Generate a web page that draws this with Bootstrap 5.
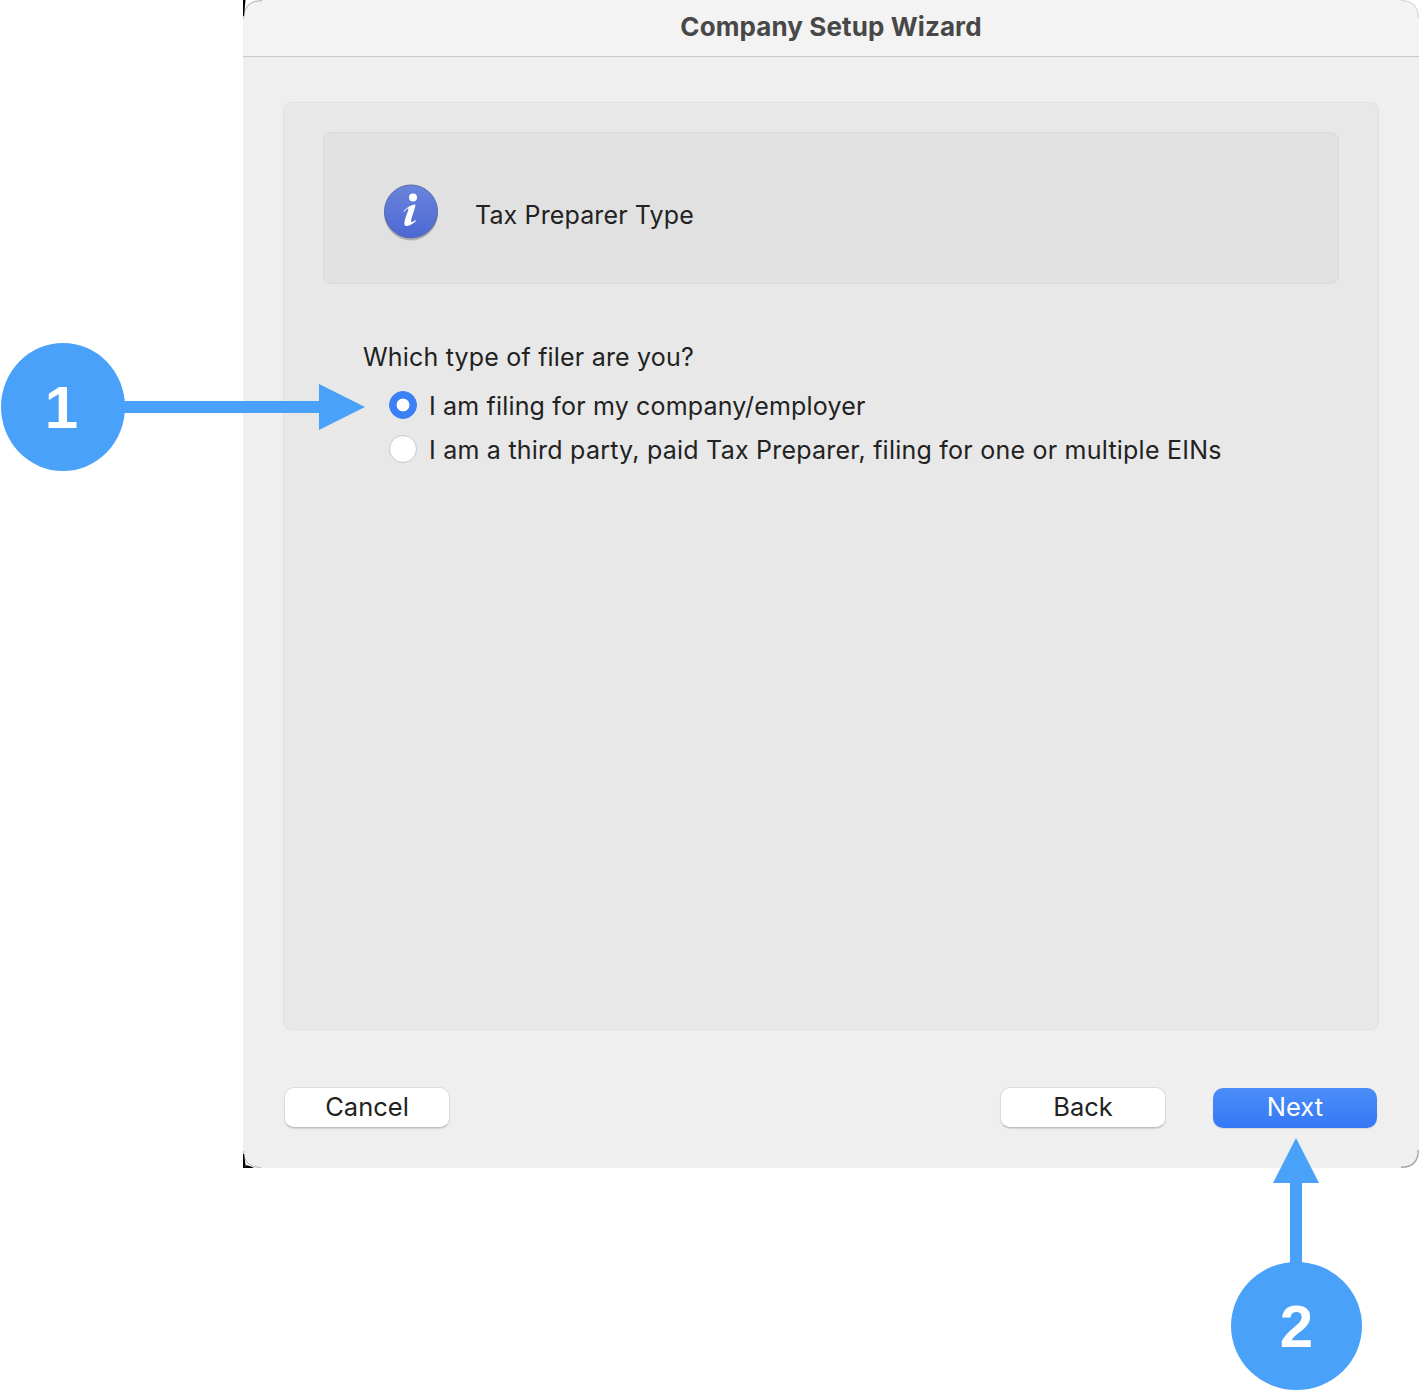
<!DOCTYPE html>
<html lang="en">
<head>
<meta charset="utf-8">
<title>Company Setup Wizard</title>
<link href="https://cdn.jsdelivr.net/npm/bootstrap@5.3.0/dist/css/bootstrap.min.css" rel="stylesheet">
<style>
html,body{height:1391px;overflow:hidden;background:#fff}
body{position:relative;font-family:Inter,"Liberation Sans",sans-serif;color:#222}
.wiz-window{margin-left:243px;width:1176px;height:1168px;background:#efefef;border-radius:16px;overflow:hidden;display:flex;flex-direction:column}
.wiz-title{height:57px;background:#f3f3f3;border-bottom:1px solid #c9c9c9;font:700 26px Inter,"Liberation Sans",sans-serif;letter-spacing:.1px;color:#484848;padding-bottom:4px}
.wiz-body{flex:1;padding:45px 40px 40px;display:flex;flex-direction:column}
.wiz-panel{height:928px;background:#e8e8e8;border:1px solid #e0e0e0;border-radius:8px;padding:29px 39px}
.wiz-head{height:152px;background:#e1e1e1;border:1px solid #dadada;border-radius:8px;padding:10px 60px 0;gap:35px;font-size:25px;letter-spacing:.13px}
.wiz-head span{margin-top:6px}
.wiz-q{font-size:25px;line-height:30px;margin:58px 0 0 40px;letter-spacing:.19px}
.wiz-opts{margin:19px 0 0 66px;font-size:25px;line-height:30px;letter-spacing:.23px}
.wiz-opts .form-check{display:flex;align-items:center;min-height:30px;padding:0;margin:0 0 14px;gap:12px}
.wiz-opts .form-check-input{float:none;margin:-3px 0 0;width:28px;height:28px;flex:none;background-color:#fff;border:1px solid #c8c8c8;box-shadow:none}
.wiz-opts .form-check-input:checked{background-color:#3b80f7;border-color:#3b80f7;background-image:radial-gradient(circle,#fff 0 6px,transparent 6.8px)}
.wiz-opts .form-check-label{white-space:nowrap}
.wiz-opts .form-check:first-child .form-check-label{letter-spacing:.17px}
.wiz-foot{margin-top:57px;padding:0 2px 0 1px}
.wiz-btn{width:166px;height:41px;padding:0 0 2px;font-size:25.5px;line-height:38px;border-radius:10px;background:#fff;border:1px solid #dcdcdc;border-bottom-color:#bdbdbd;color:#222;box-shadow:0 1px 1px rgba(0,0,0,.12)}
.wiz-btn-main{width:164px;height:40px;margin-top:1px;background:linear-gradient(#4b8ef8,#3478f6);border:0;color:#fff;box-shadow:0 1px 1px rgba(0,0,0,.1)}
.wiz-back{margin-right:47px}
.anno{position:absolute;background:#4aa1f9}
.anno-num{position:absolute;background:#4aa1f9;border-radius:50%;color:#fff;font:700 60px/1 "Liberation Sans",sans-serif;display:flex;align-items:center;justify-content:center;padding-top:2px}
.anno-head{position:absolute;display:block}
.corner{position:absolute;display:block}
</style>
</head>
<body>
<div class="wiz-window">
  <div class="wiz-title d-flex align-items-center justify-content-center">Company Setup Wizard</div>
  <div class="wiz-body">
    <div class="wiz-panel">
      <div class="wiz-head d-flex align-items-center">
        <svg width="56" height="58" viewBox="0 0 56 58" aria-hidden="true">
          <defs>
            <linearGradient id="ig" x1="0" y1="0" x2="0" y2="1"><stop offset="0" stop-color="#6a84dc"/><stop offset="1" stop-color="#4c68d2"/></linearGradient>
          </defs>
          <circle cx="27" cy="29.5" r="27" fill="#7a7a7a" opacity=".45"/>
          <circle cx="27" cy="27.5" r="26.5" fill="url(#ig)" stroke="#5a6aa8" stroke-width="1"/>
          <circle cx="29" cy="13.5" r="4" fill="#fff"/>
          <path d="M19.5 27.5C23 23.5 27 20.5 31.5 20.5C30.5 27 27.5 33 27 37C27 38.5 28 38.5 31.5 36L32 37C28 40.5 25 42 22.5 42C20.5 42 20 40 20.5 37.5C21.5 32.5 24 28 24.5 25C24.5 23.8 23 24.5 20 28Z" fill="#fff"/>
        </svg>
        <span>Tax Preparer Type</span>
      </div>
      <div class="wiz-q">Which type of filer are you?</div>
      <div class="wiz-opts">
        <div class="form-check">
          <input class="form-check-input" type="radio" name="filer" id="f1" checked>
          <label class="form-check-label" for="f1">I am filing for my company/employer</label>
        </div>
        <div class="form-check">
          <input class="form-check-input" type="radio" name="filer" id="f2">
          <label class="form-check-label" for="f2">I am a third party, paid Tax Preparer, filing for one or multiple EINs</label>
        </div>
      </div>
    </div>
    <div class="wiz-foot d-flex align-items-center">
      <button type="button" class="btn wiz-btn me-auto">Cancel</button>
      <button type="button" class="btn wiz-btn wiz-back">Back</button>
      <button type="button" class="btn wiz-btn wiz-btn-main">Next</button>
    </div>
  </div>
</div>

<svg class="corner" style="left:243px;top:0" width="20" height="20" viewBox="0 0 20 20" aria-hidden="true"><path d="M.5 19Q.5 .5 19 .5" fill="none" stroke="#b5b5b5"/><polygon points="0,0 2.5,0 1,16 0,16" fill="#000"/></svg>
<svg class="corner" style="left:243px;top:1148px" width="20" height="20" viewBox="0 0 20 20" aria-hidden="true"><path d="M.5 3Q.5 19.5 18 19.5" fill="none" stroke="#b5b5b5"/><polygon points="0,6 1,6 3,20 0,20" fill="#000"/><polygon points="3,17 8,18.5 11,20 3,20" fill="#000"/></svg>
<svg class="corner" style="left:1399px;top:1148px" width="20" height="20" viewBox="0 0 20 20" aria-hidden="true"><path d="M19.3 2Q19.3 19.3 2 19.3" fill="none" stroke="#a8a8a8" stroke-width="1.4"/></svg>
<svg class="corner" style="left:1399px;top:0" width="20" height="20" viewBox="0 0 20 20" aria-hidden="true"><path d="M2 .5Q19.5 .5 19.5 18" fill="none" stroke="#d2d2d2"/></svg>

<div class="anno" style="left:120px;top:401px;width:200px;height:12px"></div>
<svg class="anno-head" style="left:319px;top:384px" width="46" height="46" viewBox="0 0 46 46"><polygon points="0,0 46,23 0,46" fill="#4aa1f9"/></svg>
<div class="anno-num" style="left:1px;top:343px;width:124px;height:128px;padding-right:3px">1</div>

<div class="anno" style="left:1290px;top:1180px;width:12px;height:90px"></div>
<svg class="anno-head" style="left:1273px;top:1138px" width="46" height="46" viewBox="0 0 46 46"><polygon points="23,0 46,45 0,45" fill="#4aa1f9"/></svg>
<div class="anno-num" style="left:1231px;top:1262px;width:131px;height:128px">2</div>

<script src="https://cdn.jsdelivr.net/npm/bootstrap@5.3.0/dist/js/bootstrap.bundle.min.js"></script>
</body>
</html>
